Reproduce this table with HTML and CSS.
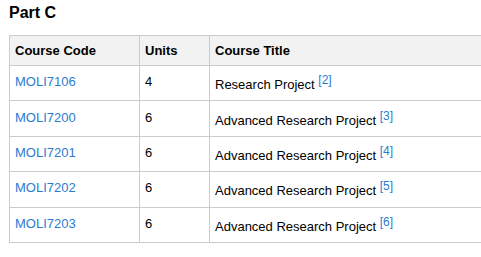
FILE: index.html
```html
<!DOCTYPE html>
<html>
<head>
<meta charset="utf-8">
<link rel="stylesheet" href="styles.css">
</head>
<body>
<h3 class="title">Part C</h3>
<table class="courses">
  <thead>
    <tr><th class="c-code">Course Code</th><th class="c-units">Units</th><th class="c-title">Course Title</th></tr>
  </thead>
  <tbody>
    <tr><td><a href="#">MOLI7106</a></td><td>4</td><td>Research Project <sup><a href="#">[2]</a></sup></td></tr>
    <tr><td><a href="#">MOLI7200</a></td><td>6</td><td>Advanced Research Project <sup><a href="#">[3]</a></sup></td></tr>
    <tr><td><a href="#">MOLI7201</a></td><td>6</td><td>Advanced Research Project <sup><a href="#">[4]</a></sup></td></tr>
    <tr><td><a href="#">MOLI7202</a></td><td>6</td><td>Advanced Research Project <sup><a href="#">[5]</a></sup></td></tr>
    <tr><td><a href="#">MOLI7203</a></td><td>6</td><td>Advanced Research Project <sup><a href="#">[6]</a></sup></td></tr>
  </tbody>
</table>
</body>
</html>
```
FILE: styles.css
```css
body {
  margin: 0;
  padding: 0 0 0 9px;
  font-family: "Liberation Sans", Arial, sans-serif;
  font-size: 13px;
  color: #000;
  background: #fff;
  overflow: hidden;
}
.title {
  font-size: 16px;
  font-weight: bold;
  margin: 4px 0 13px 0;
  line-height: 18px;
}
.courses {
  border-collapse: collapse;
  width: 600px;
}
.courses th,
.courses td {
  border: 1px solid #cccccc;
  text-align: left;
  vertical-align: top;
  padding: 8.2px 5px;
  line-height: 15px;
}
.courses th {
  background: #f2f2f2;
  font-weight: bold;
  padding: 7px 5px;
}
.c-code { width: 119px; }
.c-units { width: 59px; }
.courses a {
  color: #2b7bd1;
  text-decoration: none;
}
.courses sup {
  font-size: 12px;
  line-height: 12px;
  vertical-align: 5px;
}
```
